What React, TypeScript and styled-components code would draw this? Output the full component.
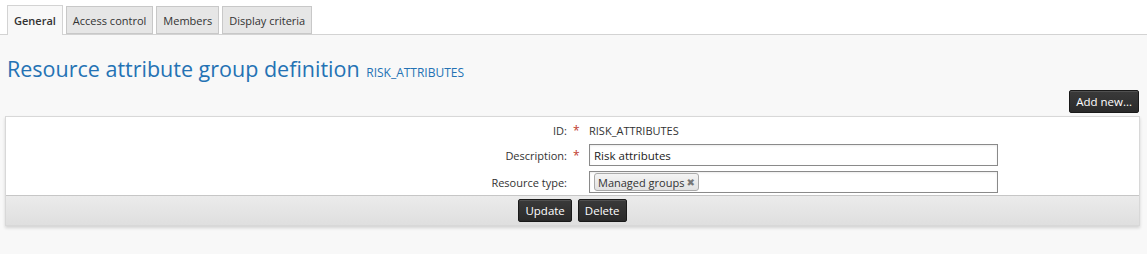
import * as React from 'react'
import styled, { createGlobalStyle } from 'styled-components'

const GlobalStyle = createGlobalStyle`
    html, body {
        margin: 0;
        padding: 0;
        background: #f8f8f8;
        font-family: 'Open Sans', 'DejaVu Sans', sans-serif;
        font-size: 11px;
        color: #333;
    }
`

const Page = styled.div`
    width: 1147px;
    height: 254px;
    background: #f8f8f8;
`

const TabBar = styled.div`
    display: flex;
    gap: 3px;
    align-items: flex-end;
    height: 35px;
    padding-left: 7px;
    background: #fff;
    border-bottom: 1px solid #d3d3d3;
    box-sizing: border-box;
`

const Tab = styled.div<{ $active?: boolean }>`
    display: flex;
    align-items: center;
    height: ${p => (p.$active ? '30px' : '28px')};
    margin-bottom: ${p => (p.$active ? '-1px' : '0')};
    padding: 0 6px;
    box-sizing: border-box;
    border: 1px solid ${p => (p.$active ? '#d3d3d3' : '#c8c8c8')};
    border-bottom: ${p => (p.$active ? 'none' : '1px solid #c8c8c8')};
    background: ${p => (p.$active ? '#f8f8f8' : '#e6e6e6')};
    font-weight: ${p => (p.$active ? 600 : 400)};
    color: #333;
    cursor: pointer;
`

const Content = styled.div`
    padding: 19px 7px 0 5px;
`

const Title = styled.h1`
    margin: 0 0 0 2px;
    font-size: 21.5px;
    font-weight: 400;
    color: #2472b4;
    line-height: 30px;
`

const Code = styled.span`
    font-size: 12px;
    margin-left: 1px;
`

const Toolbar = styled.div`
    display: flex;
    justify-content: flex-end;
    margin-top: 2px;
    padding-right: 1px;
`

const DarkButton = styled.button`
    height: 23px;
    padding: 0 6px;
    font-family: inherit;
    font-size: 11.5px;
    color: #fff;
    background: linear-gradient(#3a3a3a, #2a2a2a);
    border: 1px solid #1a1a1a;
    border-radius: 2px;
    box-shadow: inset 0 1px 0 rgba(255, 255, 255, 0.12);
    cursor: pointer;
`

const Panel = styled.div`
    margin-top: 3px;
    background: #fff;
    border: 1px solid #d8d8d8;
    box-shadow: 0 2px 3px rgba(0, 0, 0, 0.15);
`

const FormBody = styled.div`
    display: grid;
    grid-template-columns: 561px 22px 1fr;
    row-gap: 5px;
    padding: 4px 0 2px;
    align-items: center;
`

const Label = styled.div`
    text-align: right;
    white-space: nowrap;
`

const Required = styled.span`
    color: #c0392b;
    padding-left: 6px;
    font-size: 12px;
`

const Value = styled.div`
    min-height: 18px;
    display: flex;
    align-items: center;
`

const Field = styled.div`
    width: 409px;
    height: 22px;
    box-sizing: border-box;
    border: 1px solid #8a8a8a;
    background: #fff;
    display: flex;
    align-items: center;
    padding: 0 4px;
    font-size: 11.5px;
    color: #222;
    box-shadow: inset 0 1px 2px rgba(0, 0, 0, 0.08);
`

const Chip = styled.span`
    display: inline-flex;
    align-items: center;
    gap: 2px;
    height: 18px;
    box-sizing: border-box;
    padding: 0 3px 0 3px;
    border: 1px solid #aaa;
    border-radius: 3px;
    background: linear-gradient(#f4f4f4, #e2e2e2);
    font-size: 11px;
    color: #333;
`

const ChipClose = styled.span`
    color: #777;
    font-size: 10px;
    font-weight: 700;
`

const Footer = styled.div`
    display: flex;
    justify-content: center;
    gap: 6px;
    padding: 3px 0 3px;
    border-top: 1px solid #c6c6c6;
    background: linear-gradient(#ebebeb, #dfdfdf);
`

export default function App() {
    return (
        <Page>
            <GlobalStyle />
            <TabBar>
                <Tab $active>General</Tab>
                <Tab>Access control</Tab>
                <Tab>Members</Tab>
                <Tab>Display criteria</Tab>
            </TabBar>
            <Content>
                <Title>
                    Resource attribute group definition <Code>RISK_ATTRIBUTES</Code>
                </Title>
                <Toolbar>
                    <DarkButton>Add new...</DarkButton>
                </Toolbar>
                <Panel>
                    <FormBody>
                        <Label>ID:</Label>
                        <Required>*</Required>
                        <Value>RISK_ATTRIBUTES</Value>

                        <Label>Description:</Label>
                        <Required>*</Required>
                        <Field>Risk attributes</Field>

                        <Label>Resource type:</Label>
                        <span />
                        <Field>
                            <Chip>
                                Managed groups <ChipClose>✖</ChipClose>
                            </Chip>
                        </Field>
                    </FormBody>
                    <Footer>
                        <DarkButton>Update</DarkButton>
                        <DarkButton>Delete</DarkButton>
                    </Footer>
                </Panel>
            </Content>
        </Page>
    )
}
